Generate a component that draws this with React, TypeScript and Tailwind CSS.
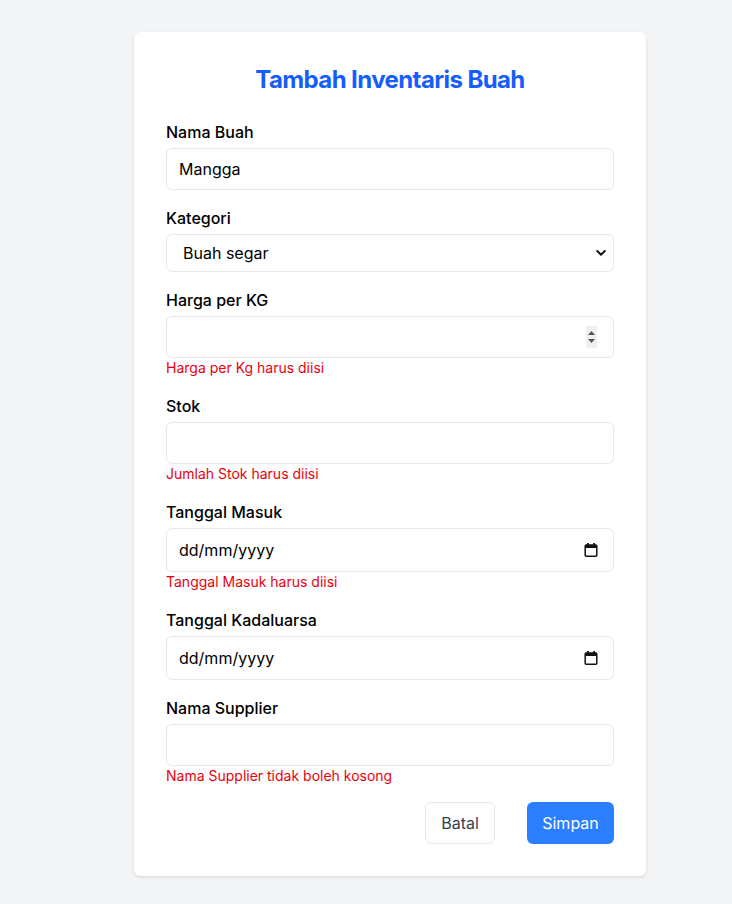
import { useState } from "react";

type Errors = Record<string, string>;

function ChevronDown() {
  return (
    <svg width="10" height="7" viewBox="0 0 10 7" className="pointer-events-none absolute right-[8px] top-1/2 -translate-y-1/2">
      <path d="M1.2 1.5 L5 5.2 L8.8 1.5" fill="none" stroke="#111" strokeWidth="1.9" strokeLinecap="round" strokeLinejoin="round" />
    </svg>
  );
}

function Spinner() {
  return (
    <div className="pointer-events-none absolute right-[17px] top-1/2 flex h-[22px] w-[11px] -translate-y-1/2 flex-col items-center justify-center gap-[4px] bg-[#efefef]">
      <svg width="7" height="4" viewBox="0 0 7 4">
        <path d="M3.5 0 L7 4 L0 4 Z" fill="#555" />
      </svg>
      <svg width="7" height="4" viewBox="0 0 7 4">
        <path d="M0 0 L7 0 L3.5 4 Z" fill="#555" />
      </svg>
    </div>
  );
}

function CalendarIcon() {
  return (
    <svg width="14" height="15" viewBox="0 0 14 15" className="pointer-events-none absolute right-[16px] top-1/2 -translate-y-1/2">
      <rect x="3" y="0.5" width="1.8" height="3" fill="#111" />
      <rect x="9.2" y="0.5" width="1.8" height="3" fill="#111" />
      <rect x="1.2" y="2.5" width="11.6" height="11.3" rx="1" fill="none" stroke="#111" strokeWidth="1.5" />
      <rect x="1.2" y="2.5" width="11.6" height="3" fill="#111" />
    </svg>
  );
}

const inputCls =
  "w-full h-[42px] rounded-md border border-gray-200 bg-white px-3 text-base text-black outline-none";

export default function App() {
  const [nama, setNama] = useState("Mangga");
  const [kategori, setKategori] = useState("segar");
  const [harga, setHarga] = useState("");
  const [stok, setStok] = useState("");
  const [masuk, setMasuk] = useState("");
  const [kadaluarsa, setKadaluarsa] = useState("");
  const [supplier, setSupplier] = useState("");

  // errors shown as in the submitted state
  const errors: Errors = {
    harga: harga ? "" : "Harga per Kg harus diisi",
    stok: stok ? "" : "Jumlah Stok harus diisi",
    masuk: masuk ? "" : "Tanggal Masuk harus diisi",
    supplier: supplier ? "" : "Nama Supplier tidak boleh kosong",
  };

  return (
    <div className="min-h-screen bg-gray-100 pt-8 pb-7 font-['Inter',_'Liberation_Sans',_sans-serif]">
      <div className="ml-[134px] w-[512px] rounded-md bg-white p-8 shadow-[0_1px_3px_rgba(0,0,0,0.12)]">
        <h1 className="mb-6 text-center text-2xl leading-8 font-bold tracking-tight text-blue-600">Tambah Inventaris Buah</h1>

        <form className="flex flex-col gap-4" onSubmit={(e) => e.preventDefault()}>
          <div>
            <label className="mb-1 block text-base leading-6 font-medium text-black">Nama Buah</label>
            <input className={inputCls} value={nama} onChange={(e) => setNama(e.target.value)} />
          </div>

          <div>
            <label className="mb-1 block text-base leading-6 font-medium text-black">Kategori</label>
            <div className="relative">
              <select
                className="h-[38px] w-full appearance-none rounded-md border border-gray-200 bg-white pl-4 text-base text-black outline-none"
                value={kategori}
                onChange={(e) => setKategori(e.target.value)}
              >
                <option value="segar">Buah segar</option>
                <option value="kering">Buah kering</option>
                <option value="beku">Buah beku</option>
              </select>
              <ChevronDown />
            </div>
          </div>

          <div>
            <label className="mb-1 block text-base leading-6 font-medium text-black">Harga per KG</label>
            <div className="relative">
              <input className={inputCls} inputMode="numeric" value={harga} onChange={(e) => setHarga(e.target.value)} />
              <Spinner />
            </div>
            {errors.harga && <p className="text-sm leading-5 text-red-600">{errors.harga}</p>}
          </div>

          <div>
            <label className="mb-1 block text-base leading-6 font-medium text-black">Stok</label>
            <input className={inputCls} inputMode="numeric" value={stok} onChange={(e) => setStok(e.target.value)} />
            {errors.stok && <p className="text-sm leading-5 text-red-600">{errors.stok}</p>}
          </div>

          <div>
            <label className="mb-1 block text-base leading-6 font-medium text-black">Tanggal Masuk</label>
            <div className="relative">
              <input
                className={inputCls + " h-[44px] placeholder:text-black"}
                placeholder="dd/mm/yyyy"
                value={masuk}
                onChange={(e) => setMasuk(e.target.value)}
              />
              <CalendarIcon />
            </div>
            {errors.masuk && <p className="text-sm leading-5 text-red-600">{errors.masuk}</p>}
          </div>

          <div>
            <label className="mb-1 block text-base leading-6 font-medium text-black">Tanggal Kadaluarsa</label>
            <div className="relative">
              <input
                className={inputCls + " h-[44px] placeholder:text-black"}
                placeholder="dd/mm/yyyy"
                value={kadaluarsa}
                onChange={(e) => setKadaluarsa(e.target.value)}
              />
              <CalendarIcon />
            </div>
          </div>

          <div>
            <label className="mb-1 block text-base leading-6 font-medium text-black">Nama Supplier</label>
            <input className={inputCls} value={supplier} onChange={(e) => setSupplier(e.target.value)} />
            {errors.supplier && <p className="text-sm leading-5 text-red-600">{errors.supplier}</p>}
          </div>

          <div className="flex justify-end gap-8">
            <button type="button" className="h-[42px] w-[70px] rounded-md border border-gray-200 bg-white text-base text-gray-700">
              Batal
            </button>
            <button type="submit" className="h-[42px] w-[87px] rounded-md bg-blue-500 text-base text-white">
              Simpan
            </button>
          </div>
        </form>
      </div>
    </div>
  );
}
